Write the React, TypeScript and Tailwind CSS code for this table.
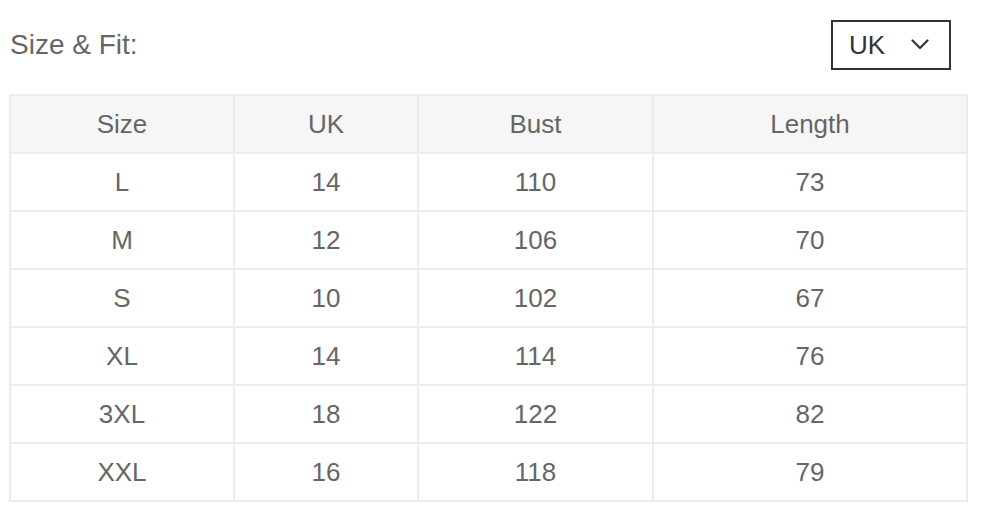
type Row = { size: string; uk: number; bust: number; length: number };

const rows: Row[] = [
  { size: 'L', uk: 14, bust: 110, length: 73 },
  { size: 'M', uk: 12, bust: 106, length: 70 },
  { size: 'S', uk: 10, bust: 102, length: 67 },
  { size: 'XL', uk: 14, bust: 114, length: 76 },
  { size: '3XL', uk: 18, bust: 122, length: 82 },
  { size: 'XXL', uk: 16, bust: 118, length: 79 },
];

const cell = 'border-2 border-[#ececec] h-[58px] text-center align-middle font-normal';

export default function App() {
  return (
    <div className="w-[986px] h-[524px] bg-white pl-[9px] pt-[20px] font-['Liberation_Sans',Arial,sans-serif] text-[#666]">
      <div className="flex items-center justify-between w-[957px] h-[49px]">
        <h3 className="text-[28px] leading-none pl-[1px]">Size &amp; Fit:</h3>
        <button className="mr-[15px] w-[120px] h-[50px] border-2 border-[#333] flex items-center pl-[16px] gap-[26px] text-[#333]">
          <span className="text-[26px] leading-none">UK</span>
          <svg width="18" height="11" viewBox="0 0 18 11" fill="none" stroke="currentColor" strokeWidth="2.2" strokeLinecap="round" strokeLinejoin="round">
            <polyline points="1.5,1.5 9,9 16.5,1.5" />
          </svg>
        </button>
      </div>
      <table className="mt-[25px] w-[957px] border-collapse table-fixed text-[26px]">
        <colgroup>
          <col className="w-[224px]" />
          <col className="w-[184px]" />
          <col className="w-[235px]" />
          <col className="w-[314px]" />
        </colgroup>
        <thead>
          <tr className="bg-[#f6f6f6]">
            <th className={cell}>Size</th>
            <th className={cell}>UK</th>
            <th className={cell}>Bust</th>
            <th className={cell}>Length</th>
          </tr>
        </thead>
        <tbody>
          {rows.map(r => (
            <tr key={r.size}>
              <td className={cell}>{r.size}</td>
              <td className={cell}>{r.uk}</td>
              <td className={cell}>{r.bust}</td>
              <td className={cell}>{r.length}</td>
            </tr>
          ))}
        </tbody>
      </table>
    </div>
  );
}
